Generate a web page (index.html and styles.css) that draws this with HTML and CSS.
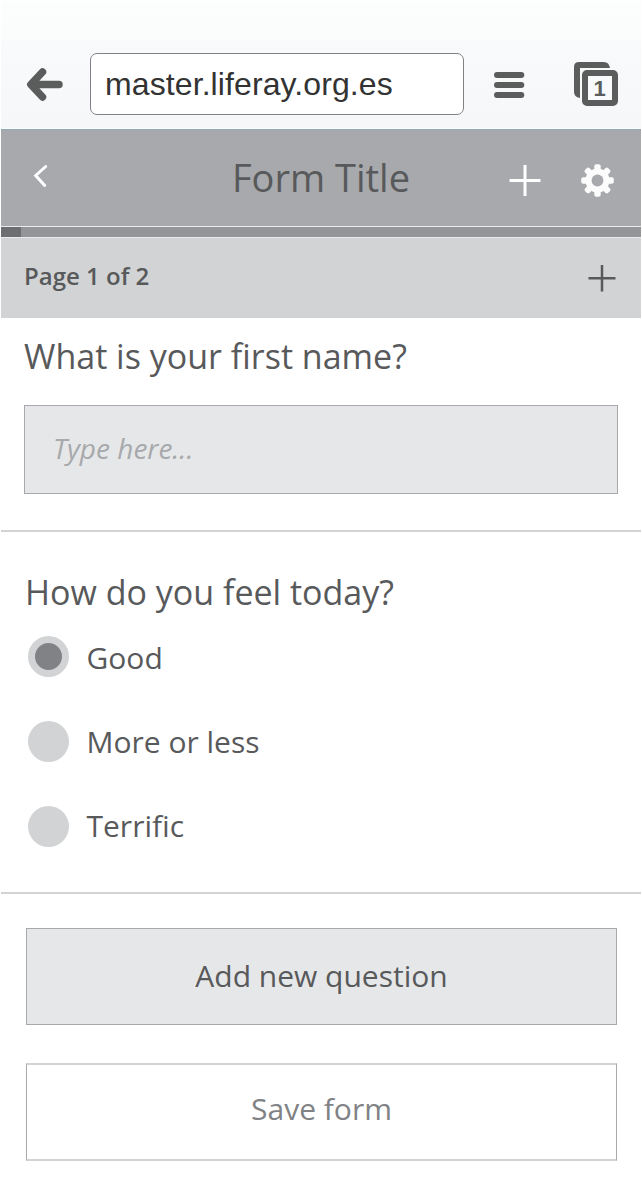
FILE: index.html
```html
<!DOCTYPE html>
<html lang="en"><head><meta charset="utf-8"><title>Form Title</title><link rel="stylesheet" href="styles.css"></head>
<body><main class="screen">
<header class="browser">
<svg class="back" width="38" height="35" viewBox="0 0 38 35"><path d="M16.500 5 4.800 17.500l11.700 12.500M6 17.500h27" fill="none" stroke="#5b5c5c" stroke-width="7.500" stroke-linecap="round" stroke-linejoin="round"/></svg>
<div class="address">master.liferay.org.es</div>
<svg class="menu" width="32" height="27" viewBox="0 0 32 27"><path d="M4 4h24.300M4 14h24.300M4 24h24.300" stroke="#5b5c5c" stroke-width="6" stroke-linecap="round"/></svg>
<svg class="tabs" width="46" height="45" viewBox="0 0 46 45"><path d="M1 5q0-5 5-5h25q5 0 6 6H7v30q-6-1-6-6z" fill="#5b5c5c"/><rect x="12" y="11" width="30" height="30" rx="2" fill="#f7f9fa" stroke="#5b5c5c" stroke-width="6" stroke-linejoin="round"/><text x="26.500" y="34" text-anchor="middle" class="count">1</text></svg>
</header>
<div class="titlebar">
<svg class="chevron" width="16" height="24" viewBox="0 0 16 24"><path d="M12.700 2.500 2.700 11.500l9 10" fill="none" stroke="#fff" stroke-width="3" stroke-linecap="round"/></svg>
<h1 class="title">Form Title</h1>
<svg class="plus" width="32" height="32" viewBox="0 0 32 32"><path d="M.5 16.500h31M16 1v31" stroke="#fff" stroke-width="3"/></svg>
<svg class="gear" width="34" height="34" viewBox="-17.500 -17.500 34 34"><g fill="#fcfcfc"><rect x="-3.200" y="-16.300" width="6.400" height="32.600" rx="2"/><rect x="-3.200" y="-16.300" width="6.400" height="32.600" rx="2" transform="rotate(45)"/><rect x="-3.200" y="-16.300" width="6.400" height="32.600" rx="2" transform="rotate(90)"/><rect x="-3.200" y="-16.300" width="6.400" height="32.600" rx="2" transform="rotate(135)"/><circle r="12"/></g><circle r="5.900" fill="#a7a9ac"/></svg>
</div>
<div class="progress"><div class="done"></div></div>
<div class="pagebar"><span class="page">Page 1 of 2</span><svg class="addpage" width="28" height="28" viewBox="0 0 28 28"><path d="M.5 14.200h27M14 1v26.500" stroke="#58595b" stroke-width="2.500"/></svg></div>
<section class="question first"><h2 class="label">What is your first name?</h2><div class="input">Type here...</div></section>
<section class="question second"><h2 class="label">How do you feel today?</h2>
<div class="option"><span class="radio checked"></span><span class="text">Good</span></div>
<div class="option"><span class="radio"></span><span class="text">More or less</span></div>
<div class="option"><span class="radio"></span><span class="text">Terrific</span></div></section>
<div class="actions"><div class="button filled">Add new question</div><div class="button save">Save form</div></div>
</main></body></html>
```
FILE: styles.css
```css
*{box-sizing:border-box}
body{margin:0;background:#fff;color:#58595b;font-family:"Open Sans",sans-serif}
svg{display:block;flex:none}
.screen{width:640px;margin-left:1px}
h1,h2{margin:0;font-weight:400}
.browser{height:129px;background:linear-gradient(#fff 1px,#fcfdfd 1px,#fbfdfc 40px,#f9fafc 41px,#f5f7f9);border-bottom:1px solid #fff;display:flex;align-items:center;padding:40px 22px 0 25px}
.browser>*{position:relative;top:.5px}
.address{width:374px;height:62px;margin-left:26px;border:1px solid #808285;border-radius:7px;background:#fff;padding-left:14px;font:32px/60px "Liberation Sans",sans-serif;letter-spacing:.1px;color:#333}
.browser .address{top:0}
.menu{margin-left:29px}
.tabs{margin-left:auto}
.count{font:bold 22px "Liberation Sans",sans-serif;fill:#5b5c5c}
.titlebar{height:97px;background:#a7a9ac;border-top:1px solid #8fa9bd;display:flex;align-items:center;padding:4px 27px 0 32px}
.chevron{margin-bottom:8px}
.title{font-size:38px;width:178px;margin:0 0 6px 183px;white-space:nowrap}
.plus{margin-left:99px}
.gear{margin-left:auto}
.progress{height:12px;background:#939598;border:solid #e9eaeb;border-width:1px 0}
.done{width:20px;height:100%;background:#6d6e71}
.pagebar{height:80px;background:#d1d3d4;display:flex;align-items:center;justify-content:space-between;padding:0 25px 0 23px}
.page{font-size:24px;font-weight:600;margin-bottom:5px}
.question{border-bottom:2px solid #d1d3d4}
.first{height:214px;padding:14px 23px}
.label{font-size:34px;line-height:48px}
.input{height:89px;margin-top:25px;border:1px solid #a7a9ac;background:#e6e7e8;padding-left:28px;font-size:28px;line-height:85px;font-style:italic;color:#a7a9ac}
.second{height:362px;padding:37px 24px 0}
.second .label{line-height:47px;margin-bottom:-2px}
.option{height:85px;display:flex;align-items:center;gap:17.500px;padding-left:3px}
.radio{width:41px;height:41px;border-radius:50%;background:#d1d3d4}
.checked{border:7.5px solid #d1d3d4;background:#808285}
.text{font-size:30px;line-height:41px;margin-top:2px}
.option:nth-child(3) .text{margin-top:0}
.option:nth-child(4) .text{margin:0 0 2px}
.actions{padding:34px 24px 34px 25px;display:grid;gap:38px}
.button{height:97px;border:1px solid #a7a9ac;text-align:center;font-size:30px;line-height:94px}
.filled{background:#e6e7e8}
.save{height:98px;color:#808285;line-height:88px;border-width:2px 1px;border-top-color:#d1d3d4;border-bottom-color:#d1d3d4}
```
